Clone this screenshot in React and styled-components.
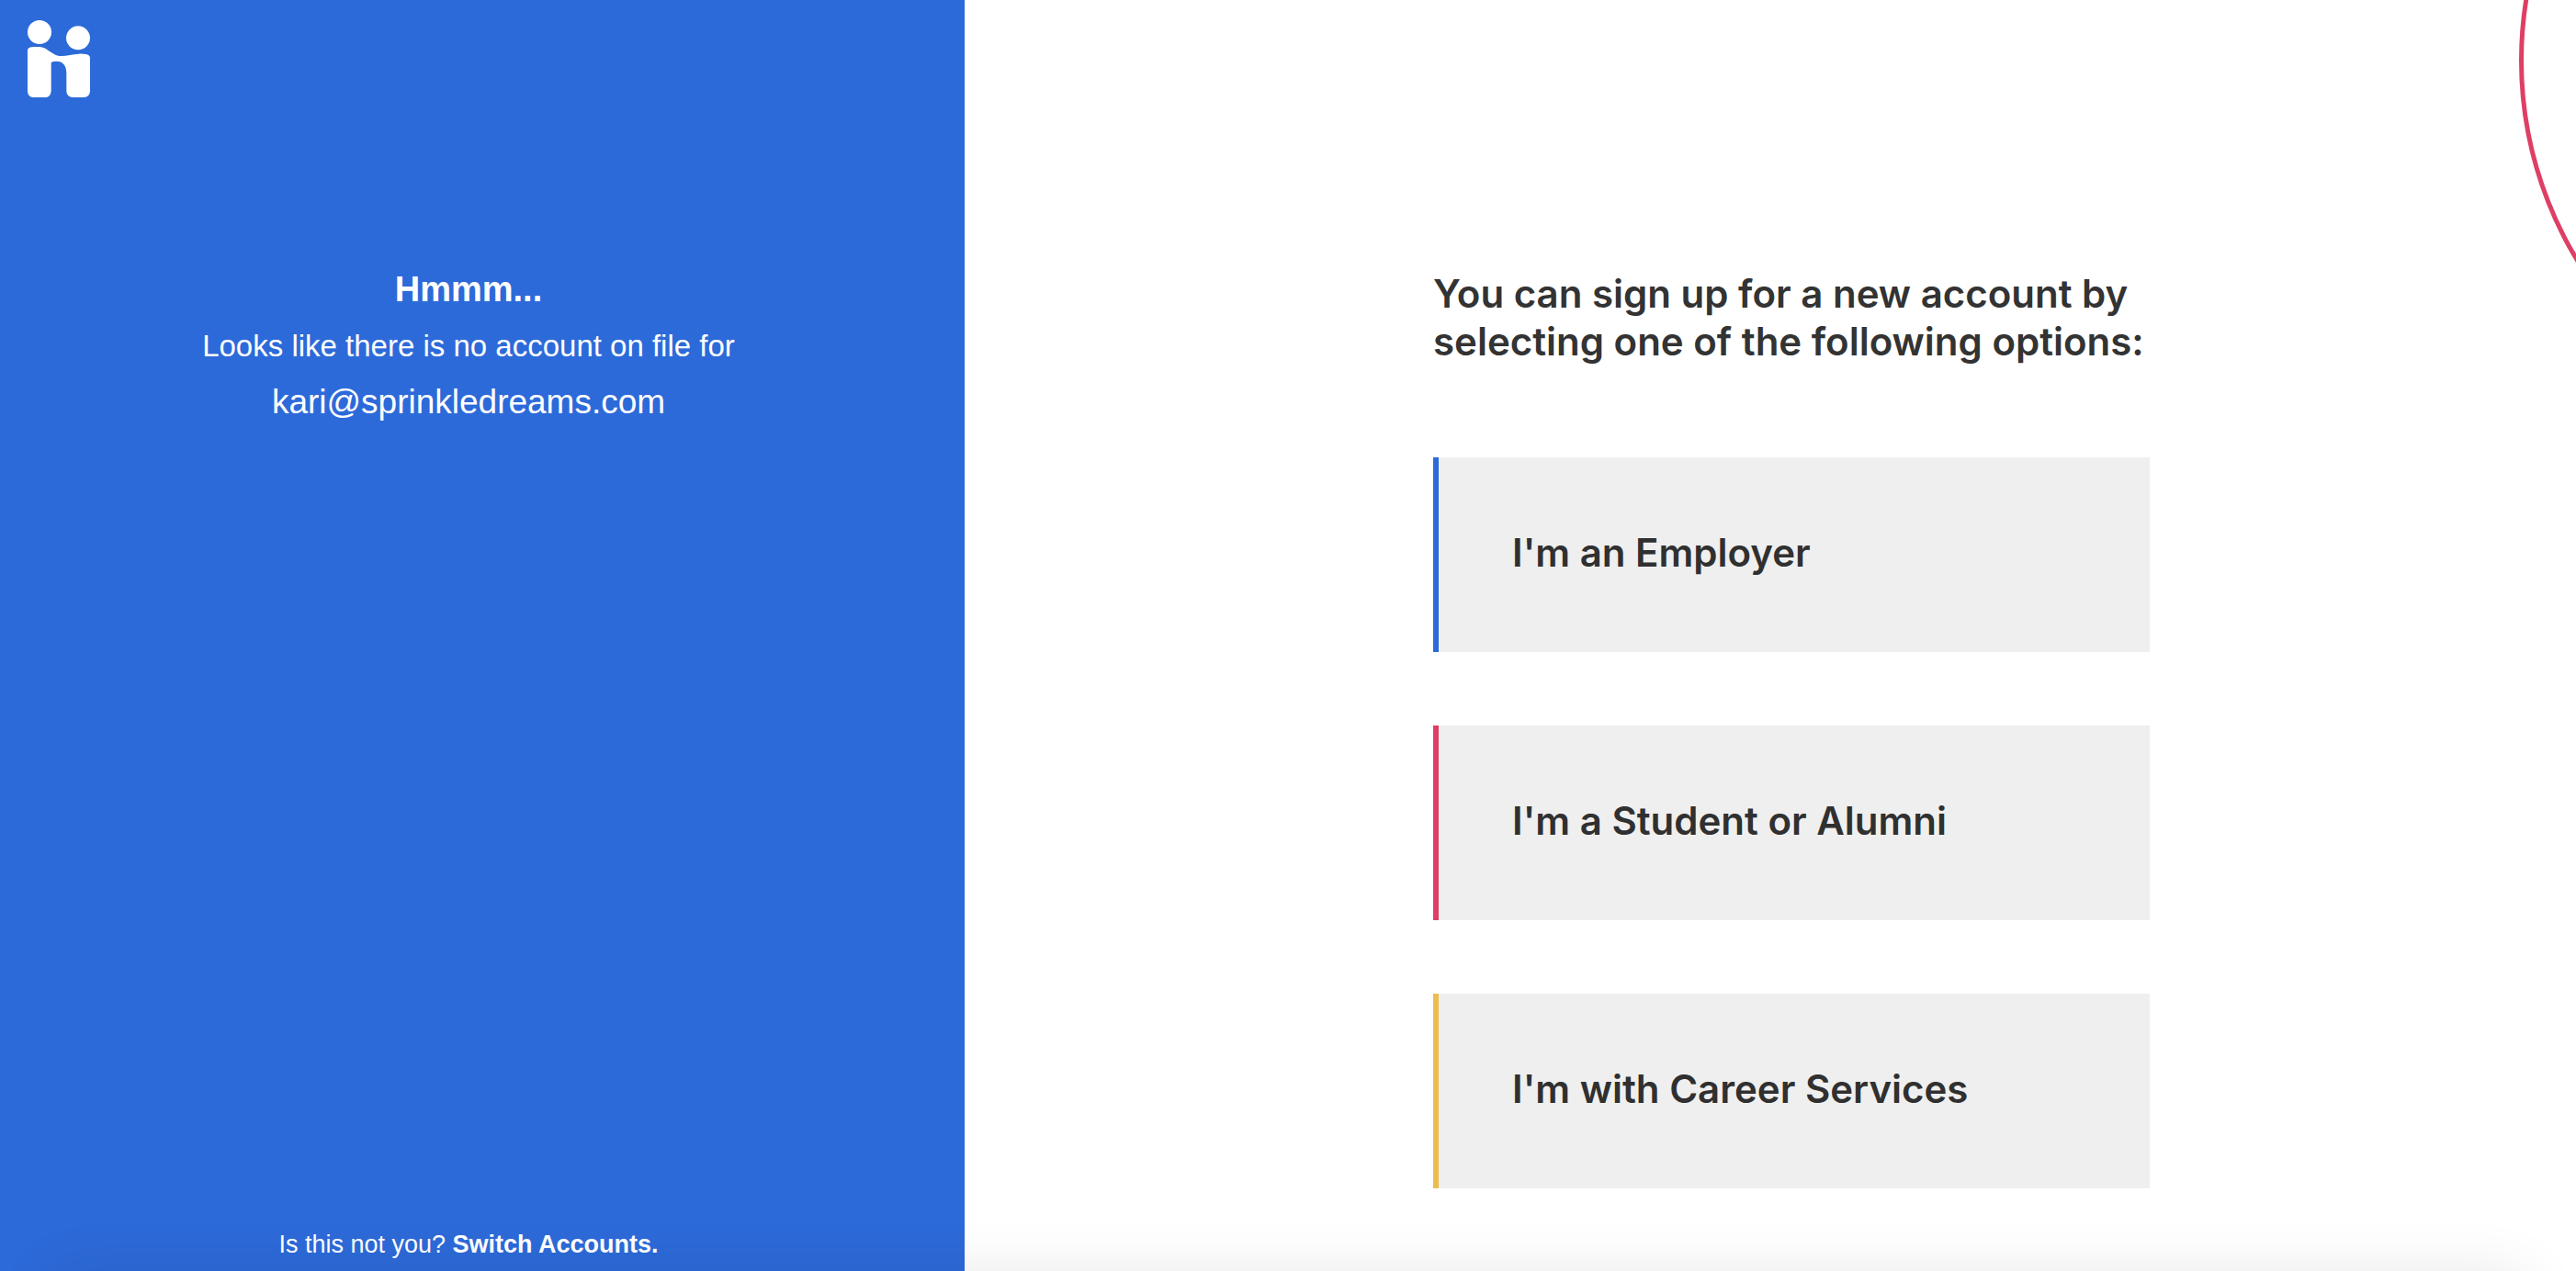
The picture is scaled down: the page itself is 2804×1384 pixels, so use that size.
import React from "react";
import styled, { createGlobalStyle } from "styled-components";

const GlobalStyle = createGlobalStyle`
  * {
    box-sizing: border-box;
  }
  body {
    margin: 0;
    background: #fff;
    font-family: Inter, "Liberation Sans", sans-serif;
  }
`;

const Page = styled.div`
  position: relative;
  display: flex;
  min-height: 100vh;
  overflow: hidden;
`;

const Sidebar = styled.aside`
  display: flex;
  flex-direction: column;
  flex: 0 0 1050px;
  padding: 22px 60px 9px 30px;
  background: #2d6ad9;
  color: #fff;
  font-family: "Liberation Sans", Arial, sans-serif;
`;

const LogoLink = styled.a`
  align-self: flex-start;
  height: 84px;

  svg {
    display: block;
    width: 68px;
    height: 84px;
    fill: #fff;
  }
`;

const Message = styled.div`
  margin-top: 179px;
  text-align: center;
`;

const MessageTitle = styled.h2`
  margin: 0;
  font-size: 38px;
  font-weight: 700;
  line-height: 61px;
`;

const MessageText = styled.p`
  margin: 0;
  font-size: ${(props) => (props.$large ? "37px" : "33px")};
  line-height: 61px;
`;

const SwitchRow = styled.p`
  margin: auto 0 0;
  font-size: 27px;
  line-height: 40px;
  text-align: center;
`;

const SwitchLink = styled.a`
  color: inherit;
  font-weight: 700;
  text-decoration: none;
`;

const Main = styled.main`
  position: relative;
  display: flex;
  flex: 1;
  justify-content: center;
  padding: 294px 0 90px 46px;
  overflow: hidden;
`;

const Circle = styled.div`
  position: absolute;
  top: -355px;
  right: -780px;
  width: 842px;
  height: 842px;
  border: 5px solid #df3f64;
  border-radius: 50%;
`;

const SignUp = styled.section`
  width: 780px;
`;

const Heading = styled.h1`
  margin: 0 0 100px;
  color: #333;
  font-size: 42px;
  font-weight: 600;
  line-height: 52px;
`;

const Options = styled.nav`
  display: flex;
  flex-direction: column;
  gap: 80px;
`;

const Option = styled.button`
  width: 100%;
  padding: 78px 80px 82px;
  border: 0;
  border-left: 6px solid ${(props) => props.$color};
  background: #efefef;
  color: #303030;
  font-family: inherit;
  font-size: 42px;
  font-weight: 600;
  line-height: 52px;
  text-align: left;
  cursor: pointer;
`;

// sits just under the fold, only its shadow shows
const BottomShadow = styled.div`
  position: absolute;
  top: 100%;
  left: 60px;
  right: 60px;
  height: 100px;
  box-shadow: 0 10px 70px rgba(0, 0, 0, 0.12);
`;

const options = [
  { label: "I'm an Employer", color: "#2d6ad9" },
  { label: "I'm a Student or Alumni", color: "#df3f64" },
  { label: "I'm with Career Services", color: "#ebbc4e" },
];

const Logo = () => (
  <svg viewBox="90 66 204 252" aria-hidden="true">
    <circle cx="129" cy="105" r="39" />
    <circle cx="255" cy="124" r="39" />
    <path d="M90 164Q91 156 102 154C120 152 135 152 145 157C160 165 176 181 194 183C214 185 234 177 258 176C272 175 286 178 290 181Q294 184 294 190V298Q293 317 274 318H236Q218 316 217 298V240C217 214 206 200 184 200C176 200 167 202 167 206V298Q165 317 150 318H106Q91 316 90 298Z" />
  </svg>
);

const App = () => {
  return (
    <>
      <GlobalStyle />
      <Page>
        <Sidebar>
          <LogoLink href="/" aria-label="Home">
            <Logo />
          </LogoLink>
          <Message>
            <MessageTitle>Hmmm...</MessageTitle>
            <MessageText>Looks like there is no account on file for</MessageText>
            <MessageText $large>kari@sprinkledreams.com</MessageText>
          </Message>
          <SwitchRow>
            Is this not you? <SwitchLink href="/login">Switch Accounts.</SwitchLink>
          </SwitchRow>
        </Sidebar>
        <Main>
          <Circle />
          <SignUp>
            <Heading>You can sign up for a new account by selecting one of the following options:</Heading>
            <Options>
              {options.map((option) => (
                <Option type="button" key={option.label} $color={option.color}>
                  {option.label}
                </Option>
              ))}
            </Options>
          </SignUp>
        </Main>
        <BottomShadow />
      </Page>
    </>
  );
};

export default App;
